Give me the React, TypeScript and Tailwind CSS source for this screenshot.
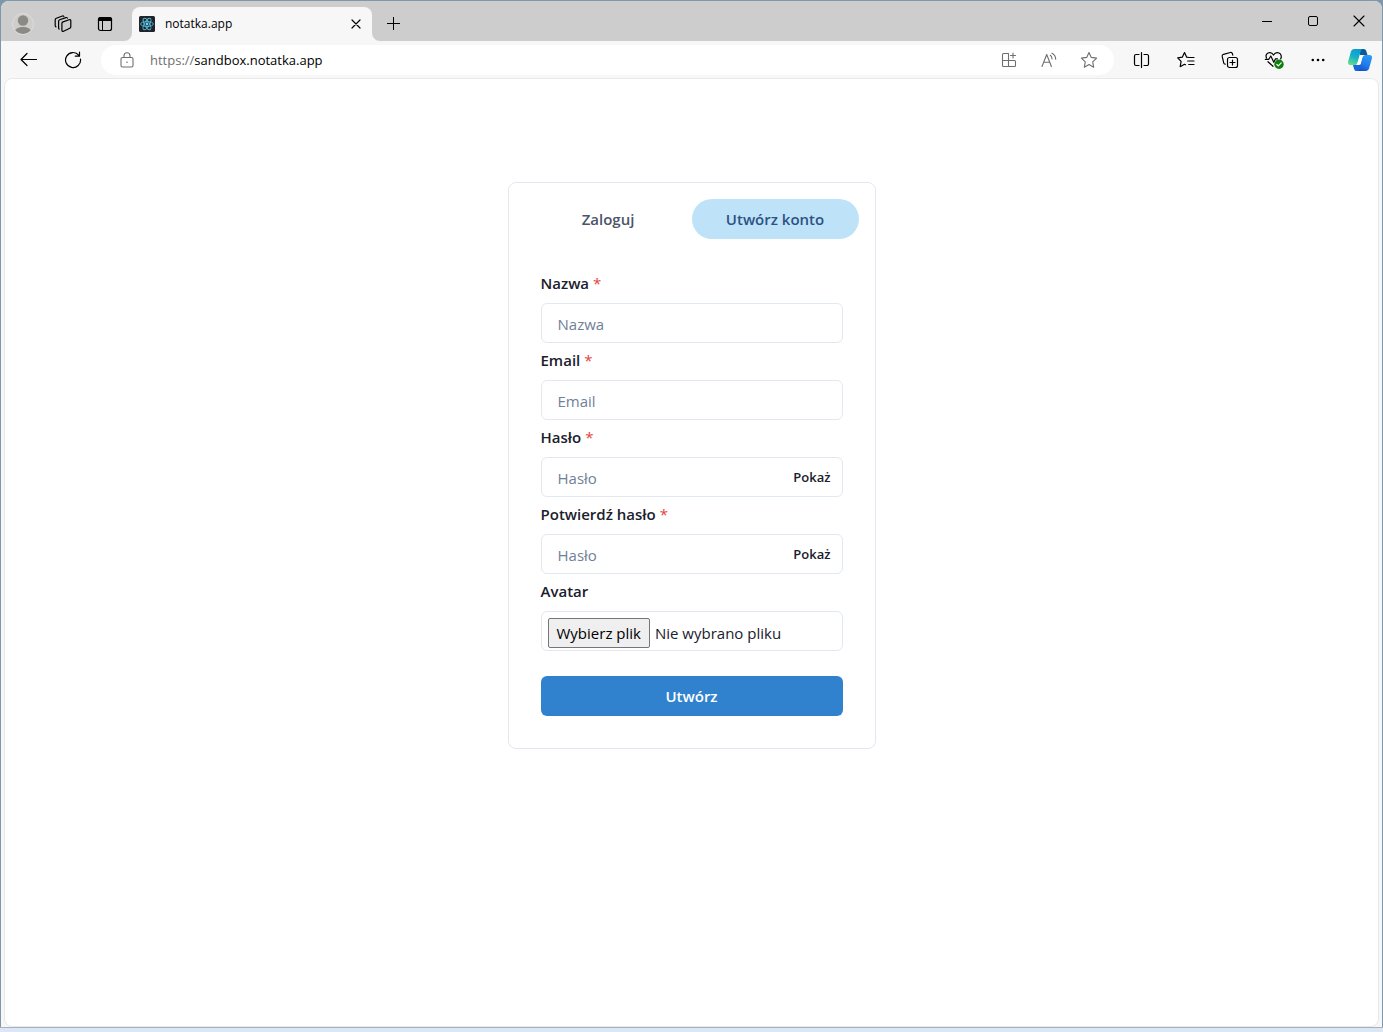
import React, { useState } from "react";

const iconProps = {
  fill: "none",
  stroke: "currentColor",
  strokeLinecap: "round" as const,
  strokeLinejoin: "round" as const,
};

const ReactLogo = () => (
  <svg width="16" height="16" viewBox="0 0 16 16" aria-hidden="true">
    <rect width="16" height="16" rx="1.5" fill="#20232a" />
    <g fill="none" stroke="#53b9d6" strokeWidth="0.9">
      <ellipse cx="8" cy="8" rx="6.4" ry="2.5" />
      <ellipse cx="8" cy="8" rx="6.4" ry="2.5" transform="rotate(60 8 8)" />
      <ellipse cx="8" cy="8" rx="6.4" ry="2.5" transform="rotate(120 8 8)" />
    </g>
    <circle cx="8" cy="8" r="1.4" fill="#61dafb" />
  </svg>
);

const CopilotLogo = () => (
  <svg width="24" height="24" viewBox="0 0 24 24" aria-hidden="true">
    <defs>
      <linearGradient id="cpLeft" x1="0.7" y1="0" x2="0.3" y2="1">
        <stop offset="0" stopColor="#0a9bd6" />
        <stop offset="0.5" stopColor="#14b0c8" />
        <stop offset="1" stopColor="#5fdc8c" />
      </linearGradient>
      <linearGradient id="cpRight" x1="0.7" y1="0" x2="0.3" y2="1">
        <stop offset="0" stopColor="#2a9bf7" />
        <stop offset="0.6" stopColor="#1f7ae8" />
        <stop offset="1" stopColor="#1a4fc6" />
      </linearGradient>
    </defs>
    <path d="M11 1h4.500c1.500 0 2.300.8 2.800 2.200L19.500 7H12z" fill="#0b5c95" />
    <path d="M13 23H8.800c-1.600 0-2.400-.9-2.800-2.300L4.800 16.500H13z" fill="#1668da" />
    <path
      d="M6.500 1h8.300c-1.400.3-1.900 1.300-2.300 2.700L9.700 14c-.6 2-1.500 3-3.300 3H2.500C.6 17-.4 15.500.1 13.500L2.800 4C3.300 2 4.500 1 6.500 1z"
      fill="url(#cpLeft)"
    />
    <path
      d="M17.500 23H9.400c1.300-.3 1.800-1.300 2.200-2.700L14.300 10c.6-2 1.500-3 3.300-3h3.900c1.900 0 2.900 1.500 2.400 3.500L21.200 20c-.5 2-1.700 3-3.700 3z"
      fill="url(#cpRight)"
    />
    <path
      d="M12.400 7h3.400c-1 .6-1.400 1.600-1.700 2.700l-1.500 5.200c-.4 1.300-1.100 2.100-2.400 2.100H7.600c1.300-.5 1.800-1.600 2.100-2.800z"
      fill="#fff"
    />
  </svg>
);

interface BarButtonProps {
  label: string;
  className: string;
  children: React.ReactNode;
}

const BarButton: React.FC<BarButtonProps> = ({ label, className, children }) => (
  <button
    type="button"
    aria-label={label}
    className={`flex shrink-0 items-center justify-center ${className}`}
  >
    {children}
  </button>
);

const TitleBar: React.FC = () => (
  <div className="flex h-10 items-end bg-[#cdcdcd]">
    <BarButton label="Profil" className="ml-[2px] h-[34px] w-10">
      <svg width="22" height="22" viewBox="0 0 22 22">
        <defs>
          <clipPath id="face">
            <circle cx="11" cy="11" r="10" />
          </clipPath>
        </defs>
        <circle cx="11" cy="11" r="10.500" fill="#cfcecb" stroke="#dedcd7" />
        <g clipPath="url(#face)" fill="#8c8986">
          <circle cx="11" cy="7.500" r="5.200" />
          <path d="M2 22c0-5.500 3-8 9-8s9 2.500 9 8z" />
        </g>
      </svg>
    </BarButton>
    <BarButton label="Obszary robocze" className="h-[34px] w-10">
      <svg width="18" height="18" viewBox="0 0 18 18" {...iconProps} strokeWidth="1.200">
        <path d="M9 6.900 15.200 4.700c.9-.3 1.600.1 1.600 1v6.100c0 .7-.3 1.100-1 1.400L9.600 16.200c-1 .4-1.700 0-1.700-1V8.500c0-.9.300-1.300 1.100-1.600z" />
        <path d="M5.200 14.100c-.5-.2-.6-.6-.6-1.200V6.400c0-.8.300-1.300 1.100-1.600l6.200-2.200c.7-.2 1.300 0 1.500.5" />
        <path d="M2 11.900c-.6-.2-.8-.6-.8-1.300V4.800c0-.8.300-1.300 1.100-1.600L8.400 1c.7-.2 1.200 0 1.500.5" />
      </svg>
    </BarButton>
    <BarButton label="Menu kart" className="h-[34px] w-11">
      <svg width="16" height="16" viewBox="0 0 16 16" {...iconProps} strokeWidth="1.200">
        <rect x="1.500" y="1.500" width="13" height="13" rx="2" />
        <path d="M1.500 4.500v-1a2 2 0 0 1 2-2h9a2 2 0 0 1 2 2v1z" fill="currentColor" />
        <path d="M5.500 5v9.500" strokeWidth="1" />
      </svg>
    </BarButton>

    {/* active tab with its flared feet */}
    <div className="-ml-[3px] h-2 w-2 shrink-0 bg-[#f7f7f7]">
      <div className="h-2 w-2 rounded-br-lg bg-[#cdcdcd]" />
    </div>
    <div className="flex h-[34px] w-60 items-center rounded-t-lg bg-[#f7f7f7] pr-1 pl-[7px]">
      <ReactLogo />
      <span className="ml-[10px] flex-1 text-[12px] text-black">notatka.app</span>
      <BarButton label="Zamknij kartę" className="h-6 w-6">
        <svg width="10" height="10" viewBox="0 0 10 10" {...iconProps} strokeWidth="1.200">
          <path d="m1 1 8 8M9 1 1 9" />
        </svg>
      </BarButton>
    </div>
    <div className="h-2 w-2 shrink-0 bg-[#f7f7f7]">
      <div className="h-2 w-2 rounded-bl-lg bg-[#cdcdcd]" />
    </div>
    <BarButton label="Nowa karta" className="h-[34px] w-7">
      <svg width="14" height="14" viewBox="0 0 14 14" stroke="currentColor">
        <path d="M6.500 0v13M0 6.500h13" />
      </svg>
    </BarButton>

    <div className="ml-auto flex">
      <BarButton label="Minimalizuj" className="h-10 w-[46px]">
        <svg width="10" height="10" viewBox="0 0 10 10" stroke="currentColor">
          <path d="M0 5.500h10" />
        </svg>
      </BarButton>
      <BarButton label="Maksymalizuj" className="h-10 w-[46px]">
        <svg width="10" height="10" viewBox="0 0 10 10" fill="none" stroke="currentColor">
          <rect x=".5" y=".5" width="9" height="9" rx="1.500" />
        </svg>
      </BarButton>
      <BarButton label="Zamknij" className="h-10 w-[46px]">
        <svg width="12" height="12" viewBox="0 0 12 12" {...iconProps} strokeWidth="1.100">
          <path d="m1 1 10 10M11 1 1 11" />
        </svg>
      </BarButton>
    </div>
  </div>
);

const AddressBar: React.FC = () => {
  const [address, setAddress] = useState("sandbox.notatka.app");
  return (
    <div className="mx-[6px] flex h-[30px] flex-1 items-center rounded-full bg-white pr-[5px] pl-[19px] text-[#6f6f6f]">
      <svg width="14" height="16" viewBox="0 0 14 16" {...iconProps} strokeWidth="1.100" aria-hidden="true">
        <rect x="1" y="5.500" width="12" height="9.500" rx="1.500" />
        <path d="M4 5.500V3.700a3 3 0 0 1 6 0v1.800" />
        <circle cx="7" cy="10.200" r=".8" fill="currentColor" stroke="none" />
      </svg>
      <label htmlFor="address" className="ml-4 pt-[2px] text-[13px]">
        https://
      </label>
      <input
        id="address"
        className="min-w-0 flex-1 pt-[2px] text-[13px] text-black outline-none"
        value={address}
        onChange={(e) => setAddress(e.target.value)}
      />
      <BarButton label="Aplikacja dostępna" className="h-[30px] w-10">
        <svg width="16" height="16" viewBox="0 0 16 16" {...iconProps} strokeWidth="1.100">
          <path d="M7.500 1.500h-5a1 1 0 0 0-1 1v11a1 1 0 0 0 1 1h11a1 1 0 0 0 1-1v-4a1 1 0 0 0-1-1h-12M7.500 1.500v13M12 1v5M9.500 3.500h5" />
        </svg>
      </BarButton>
      <BarButton label="Czytaj na głos" className="h-[30px] w-10">
        <svg width="16" height="16" viewBox="0 0 16 16" {...iconProps} strokeWidth="1.100">
          <path d="m1 14.500 4.700-12L10.400 14.500M2.600 10.300h6.200M9.300 3.300c1.100.8 1.700 2 1.700 3.600M11 1.200c2.300 1.300 3.700 3.400 3.700 6" />
        </svg>
      </BarButton>
      <BarButton label="Dodaj do ulubionych" className="h-[30px] w-10">
        <svg width="18" height="18" viewBox="0 0 18 18" {...iconProps} strokeWidth="1.100">
          <path d="m9 1.500 2.300 4.900 5.300.7-3.900 3.700 1 5.400L9 13.600l-4.700 2.600 1-5.400L1.400 7.100l5.300-.7z" />
        </svg>
      </BarButton>
    </div>
  );
};

const Toolbar: React.FC = () => (
  <div className="flex h-[38px] items-center bg-[#f7f7f7] pr-[2px] pl-[6px] text-black">
    <BarButton label="Wstecz" className="h-8 w-11">
      <svg width="18" height="16" viewBox="0 0 18 16" {...iconProps} strokeWidth="1.200">
        <path d="M16.500 7.500H1M7 1.500l-6 6 6 6" />
      </svg>
    </BarButton>
    <BarButton label="Odśwież" className="h-8 w-11">
      <svg width="18" height="18" viewBox="0 0 18 18" {...iconProps} strokeWidth="1.200">
        <path d="M16.500 8A7.500 7.500 0 1 1 14.900 4.300M15.500 1v4.200h-4.200" />
      </svg>
    </BarButton>
    <AddressBar />
    <BarButton label="Podziel ekran" className="h-8 w-11">
      <svg width="18" height="18" viewBox="0 0 18 18" {...iconProps} strokeWidth="1.200">
        <path d="M8.500 1.500v15M6 3.500H3a1.500 1.500 0 0 0-1.500 1.500v8A1.500 1.500 0 0 0 3 14.500h3M11 3.500h3a1.500 1.500 0 0 1 1.500 1.500v8a1.500 1.500 0 0 1-1.500 1.500h-3" />
      </svg>
    </BarButton>
    <BarButton label="Ulubione" className="h-8 w-11">
      <svg width="18" height="18" viewBox="0 0 18 18" {...iconProps} strokeWidth="1.200">
        <path d="M12 6.500 9.700 6.200 7.500 1.500 5.300 6.200l-4.600.7 3.400 3.500-.9 5.300 4.300-2.400 1 .5M11.700 6.500h5.300M10.700 10h6.300M11.700 13.500h5.300" />
      </svg>
    </BarButton>
    <BarButton label="Kolekcje" className="h-8 w-11">
      <svg width="18" height="18" viewBox="0 0 18 18" {...iconProps} strokeWidth="1.200">
        <rect x="6.500" y="6.500" width="10" height="10" rx="2" />
        <path d="M11.500 9v5M9 11.500h5M4.200 13.200c-.8-.1-1.300-.6-1.500-1.400L1.200 5.400C1 4.400 1.500 3.600 2.500 3.300l6.800-1.800c1-.2 1.800.2 2.100 1.200l.4 1.500" />
      </svg>
    </BarButton>
    <BarButton label="Podstawy przeglądarki" className="h-8 w-11">
      <svg width="20" height="20" viewBox="0 0 20 20" {...iconProps} strokeWidth="1.200">
        <path d="M2.500 8C1.500 5.800 2.200 3.800 4 3c2-.8 4.200-.1 5.500 2 1.300-2.100 3.500-2.800 5.500-2 2.100.9 2.900 3.400 1.700 6M1.300 9.300h3.500L6.800 6l3 6.300 1.700-3.500h2M4 11.700l5 4.600" />
        <circle cx="15" cy="14.200" r="4.700" fill="#107c10" stroke="none" />
        <path d="m12.800 14.400 1.500 1.500 2.900-3" stroke="#fff" />
      </svg>
    </BarButton>
    <BarButton label="Ustawienia i więcej" className="h-8 w-11">
      <svg width="14" height="4" viewBox="0 0 14 4" fill="currentColor">
        <circle cx="1.800" cy="2" r="1.300" />
        <circle cx="7" cy="2" r="1.300" />
        <circle cx="12.200" cy="2" r="1.300" />
      </svg>
    </BarButton>
    <BarButton label="Copilot" className="h-8 w-10">
      <CopilotLogo />
    </BarButton>
  </div>
);

interface FieldProps {
  id: string;
  label: string;
  placeholder: string;
  type: string;
}

const FieldLabel: React.FC<{ id: string; label: string; required?: boolean }> = ({
  id,
  label,
  required,
}) => (
  <label htmlFor={id} className="mb-2 block text-[15px] leading-6 font-semibold">
    {label}
    {required && <span className="ml-1 font-normal text-[#e53e3e]">*</span>}
  </label>
);

const Field: React.FC<FieldProps> = ({ id, label, placeholder, type }) => {
  const [visible, setVisible] = useState<boolean>(false);
  const isPassword = type === "password";
  return (
    <div>
      <FieldLabel id={id} label={label} required />
      <div className="flex h-10 items-center rounded-md border border-[#e2e8f0] pr-[11px] pl-4">
        <input
          id={id}
          type={isPassword && visible ? "text" : type}
          placeholder={placeholder}
          className="h-full min-w-0 flex-1 pt-[2px] text-[15px] outline-none placeholder:text-[#718096]"
        />
        {isPassword && (
          <button
            type="button"
            className="pt-[2px] text-[13px] font-semibold"
            onClick={() => setVisible(!visible)}
          >
            {visible ? "Ukryj" : "Pokaż"}
          </button>
        )}
      </div>
    </div>
  );
};

const RegisterForm: React.FC = () => {
  const [fileName, setFileName] = useState<string>("");
  return (
    <form className="flex flex-col gap-[5px] px-4 pt-8 pb-4" onSubmit={(e) => e.preventDefault()}>
      <Field id="name" label="Nazwa" placeholder="Nazwa" type="text" />
      <Field id="email" label="Email" placeholder="Email" type="email" />
      <Field id="password" label="Hasło" placeholder="Hasło" type="password" />
      <Field id="confirm" label="Potwierdź hasło" placeholder="Hasło" type="password" />
      <div>
        <FieldLabel id="avatar" label="Avatar" />
        <label
          htmlFor="avatar"
          className="flex h-10 items-center rounded-md border border-[#e2e8f0] px-[6px] pt-1 text-[15px]"
        >
          <span className="flex h-[30px] items-center rounded-xs border border-[#767676] bg-[#efefef] px-2 text-black">
            Wybierz plik
          </span>
          <span className="ml-[5px]">{fileName || "Nie wybrano pliku"}</span>
          <input
            id="avatar"
            type="file"
            className="sr-only"
            onChange={(e) => setFileName(e.target.files?.[0]?.name ?? "")}
          />
        </label>
      </div>
      <button
        type="submit"
        className="mt-5 h-10 rounded-md bg-[#3182ce] text-[15px] font-semibold text-white"
      >
        Utwórz
      </button>
    </form>
  );
};

const App: React.FC = () => {
  const [tab, setTab] = useState<string>("register");
  const active = "bg-[#bee3f8] text-[#2c5282]";
  const inactive = "text-[#4a5568]";
  return (
    <div className="flex min-h-screen flex-col bg-[#dce7f5] pb-1 font-['Open_Sans','Noto_Sans',sans-serif]">
      <div className="flex flex-1 flex-col border-b border-[#a9b1bd] bg-[#8096a9] px-px pt-px">
        <div className="flex flex-1 flex-col overflow-hidden rounded-t-lg bg-[#f7f7f7]">
          <TitleBar />
          <Toolbar />
          <main className="mx-[3px] -mt-px flex flex-1 flex-col items-center rounded-lg border border-[#e8e8e8] bg-white px-4 pt-[103px] pb-10 text-[#1a202c]">
            <div className="w-full max-w-[368px] rounded-lg border border-[#e2e8f0] p-4">
              <div role="tablist" className="grid grid-cols-2">
                <button
                  type="button"
                  role="tab"
                  aria-selected={tab === "login"}
                  onClick={() => setTab("login")}
                  className={`h-10 rounded-full text-[15px] font-semibold ${tab === "login" ? active : inactive}`}
                >
                  Zaloguj
                </button>
                <button
                  type="button"
                  role="tab"
                  aria-selected={tab === "register"}
                  onClick={() => setTab("register")}
                  className={`h-10 rounded-full text-[15px] font-semibold ${tab === "register" ? active : inactive}`}
                >
                  Utwórz konto
                </button>
              </div>
              <RegisterForm />
            </div>
          </main>
        </div>
      </div>
    </div>
  );
};

export default App;
